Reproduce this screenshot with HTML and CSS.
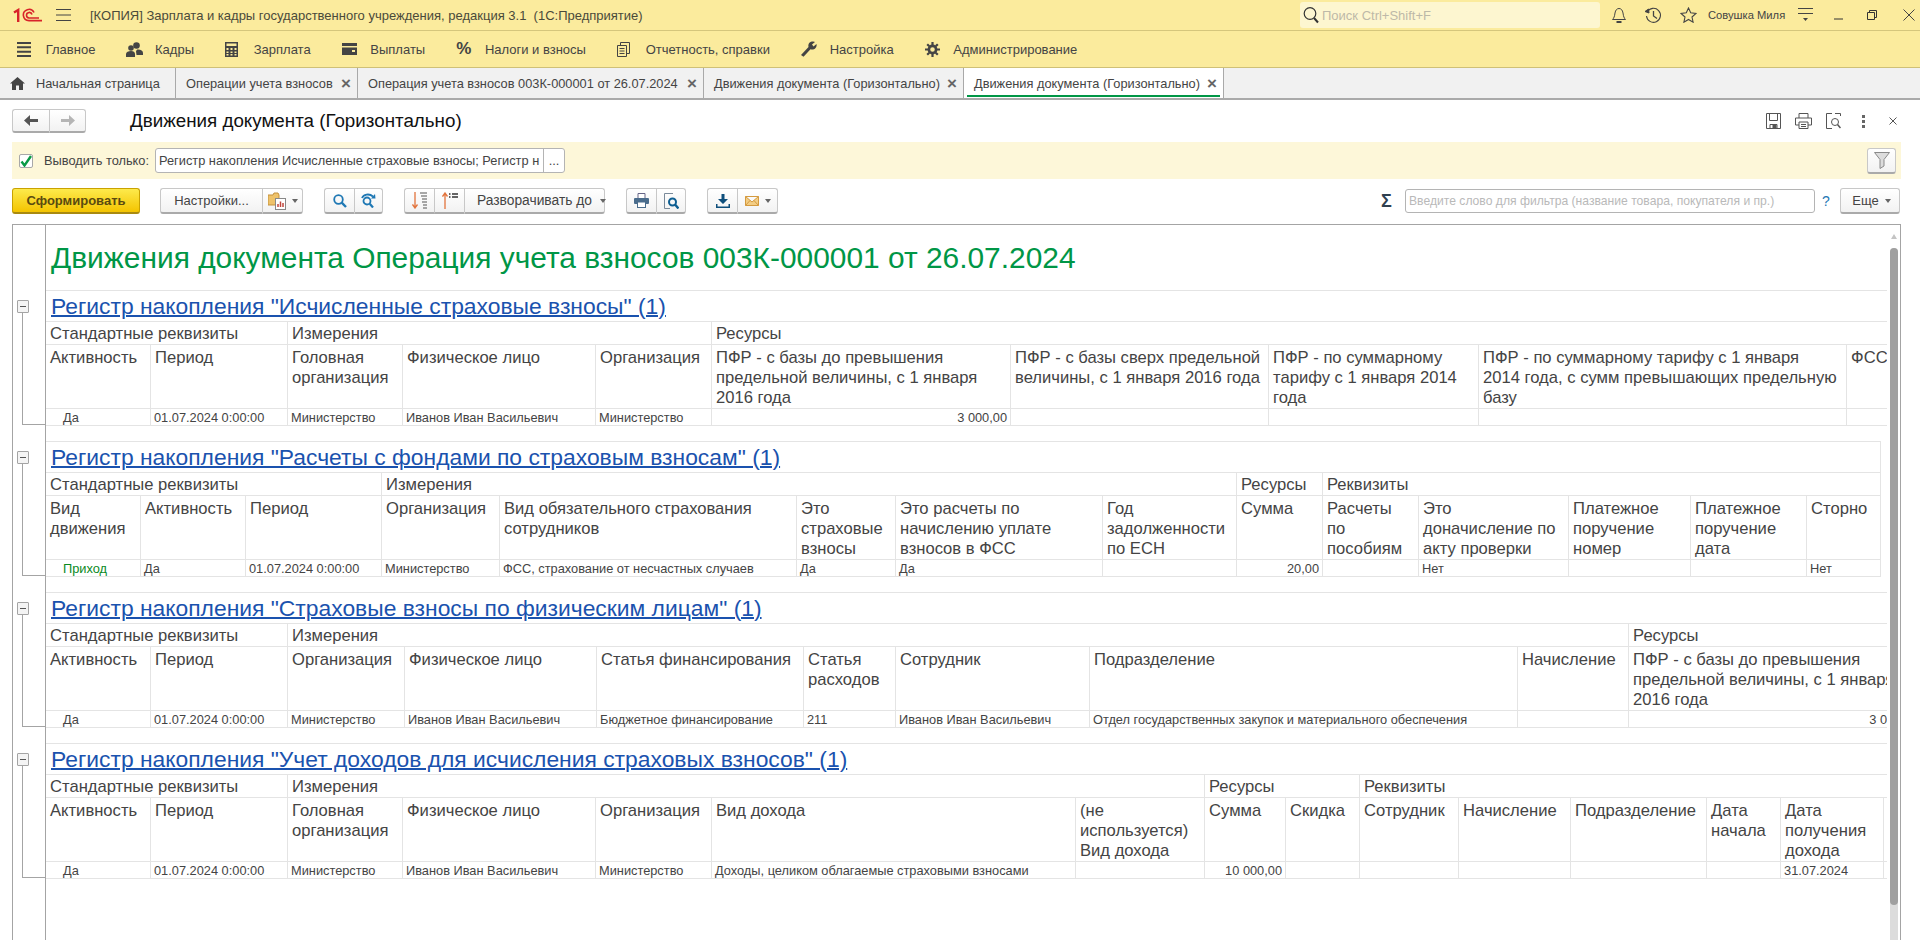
FILE: index.html
```html
<!DOCTYPE html>
<html lang="ru">
<head>
    <meta charset="UTF-8">
    <title>Движения документа (Горизонтально)</title>
    <link rel="stylesheet" href="styles.css">
</head>
<body>
    <!-- Window title -->
    <header class="titlebar">
        <svg class="logo" width="30" height="15" viewBox="0 0 30 15" fill="none" stroke="#d8232a">
            <path d="M1 4.5 5.2 2V14" stroke-width="2.4"/>
            <path d="M21 4.5A5.6 5.6 0 1 0 16 12.6H29" stroke-width="1.6"/>
            <path d="M19 6.5A2.8 2.8 0 1 0 16 10H26" stroke-width="1.6"/>
        </svg>
        <svg class="burger" width="15" height="12" viewBox="0 0 15 12" stroke="#444"><path d="M0 .5H15M0 6H15M0 11.5H15"/></svg>
        <span class="app-name">[КОПИЯ] Зарплата и кадры государственного учреждения, редакция 3.1&nbsp; (1С:Предприятие)</span>
        <div class="global-search">
            <svg width="16" height="18" viewBox="0 0 16 18" fill="none" stroke="#333"><circle cx="7" cy="7.5" r="5.8" stroke-width="1.2"/><path d="M11 12 15 16.5" stroke-width="2"/></svg>
            <span>Поиск Ctrl+Shift+F</span>
        </div>
        <div class="sys-icons">
            <svg width="16" height="17" viewBox="0 0 16 17" fill="none" stroke="#444"><path d="M1.5 12.5H14.5C13 11 12.5 9.5 12 6 11.5 3 10 1.5 8 1.5S4.5 3 4 6C3.5 9.5 3 11 1.5 12.5Z"/><path d="M5.5 15H10.5" stroke-width="2"/></svg>
            <svg width="17" height="17" viewBox="0 0 17 17" fill="none" stroke="#444"><path d="M2.3 5A7 7 0 1 1 1.5 9" stroke-width="1.1"/><path d="M0 4.5 3.5 2 4 6Z" fill="#444"/><path d="M8.5 4V9L12 11.5" stroke-width="1.3"/></svg>
            <svg width="17" height="16" viewBox="0 0 17 16" fill="none" stroke="#444" stroke-width="1.1"><path d="M8.5 1 10.7 5.8 16 6.4 12 10 13.1 15.2 8.5 12.5 3.9 15.2 5 10 1 6.4 6.3 5.8Z"/></svg>
        </div>
        <span class="user-name">Совушка Миля</span>
        <svg class="user-menu" width="15" height="14" viewBox="0 0 15 14" stroke="#444"><path d="M0 .5H15M0 5.5H15"/><path d="M5 10H10L7.5 13Z" fill="#444" stroke="none"/></svg>
        <svg class="win-min" width="9" height="2" viewBox="0 0 9 2"><path d="M0 1H9" stroke="#333"/></svg>
        <svg class="win-max" width="10" height="10" viewBox="0 0 10 10" fill="none" stroke="#333"><path d="M.5 2.5H7.5V9.5H.5Z"/><path d="M2.5 2.5V.5H9.5V7.5H7.5"/></svg>
        <svg class="win-close" width="12" height="12" viewBox="0 0 12 12" stroke="#444"><path d="M.5 .5 11.5 11.5M11.5 .5 .5 11.5"/></svg>
    </header>

    <!-- Sections -->
    <nav class="mainmenu">
        <a class="menu-item"><span class="menu-icon"><svg width="14" height="15" viewBox="0 0 14 15" stroke="#444" stroke-width="2"><path d="M0 1H14M0 5.3H14M0 9.7H14M0 14H14"/></svg></span>Главное</a>
        <a class="menu-item"><span class="menu-icon"><svg width="17" height="15" viewBox="0 0 17 15" fill="#444"><circle cx="10.5" cy="3.5" r="3.3"/><circle cx="5" cy="6" r="2.8"/><path d="M0 15V12C0 10 2.5 9 5 9S9 10 9 12V15ZM10 9.5C10.5 8 11 7.5 12 7.5 15 7.5 17 9 17 11V13H10.5Z"/></svg></span>Кадры</a>
        <a class="menu-item"><span class="menu-icon"><svg width="13" height="15" viewBox="0 0 13 15"><rect width="13" height="15" fill="#444"/><rect x="1.5" y="1.5" width="10" height="2.5" fill="#fbeb9d"/><path d="M1.5 6H3.5V8H1.5ZM5.5 6H7.5V8H5.5ZM9.5 6H11.5V8H9.5ZM1.5 9.5H3.5V11H1.5ZM5.5 9.5H7.5V11H5.5ZM9.5 9.5H11.5V11H9.5ZM1.5 12H3.5V13.5H1.5ZM5.5 12H7.5V13.5H5.5ZM9.5 12H11.5V13.5H9.5Z" fill="#fbeb9d"/></svg></span>Зарплата</a>
        <a class="menu-item"><span class="menu-icon"><svg width="15" height="12" viewBox="0 0 15 12" fill="#444"><path d="M0 0H15V3H0ZM0 4.5H15V12H0ZM10 7V9H13V7Z"/></svg></span>Выплаты</a>
        <a class="menu-item"><span class="menu-icon menu-percent">%</span>Налоги и взносы</a>
        <a class="menu-item"><span class="menu-icon"><svg width="13" height="15" viewBox="0 0 13 15" fill="none" stroke="#444"><path d="M.5 3.5H9.5V14.5H.5ZM3.5 3.5V.5H12.5V11.5H9.5M2.5 6.5H7.5M2.5 9H7.5M2.5 11.5H7.5"/></svg></span>Отчетность, справки</a>
        <a class="menu-item"><span class="menu-icon"><svg width="16" height="16" viewBox="0 0 16 16" fill="#444"><path d="M0 14 7.5 6C7 3.5 8 1 11 .5 12.5 .3 13.5 .5 14 1L11 3.5 12.5 5.5 15.5 3C16 5 15 8 12 8.5 11 8.7 10.3 8.5 9.5 8.2L2.5 15.8Z"/></svg></span>Настройка</a>
        <a class="menu-item"><span class="menu-icon"><svg width="15" height="15" viewBox="0 0 15 15" fill="none" stroke="#444"><circle cx="7.5" cy="7.5" r="3.6" stroke-width="2.6"/><path d="M7.5 0V3M7.5 12V15M0 7.5H3M12 7.5H15M2.2 2.2 4.3 4.3M10.7 10.7 12.8 12.8M12.8 2.2 10.7 4.3M4.3 10.7 2.2 12.8" stroke-width="2.2"/></svg></span>Администрирование</a>
    </nav>

    <!-- Open windows -->
    <div class="tabs">
        <div class="tab tab-home">
            <svg width="15" height="13" viewBox="0 0 15 13" fill="#444"><path d="M7.5 0 15 6.5H13V13H9V8.5H6V13H2V6.5H0Z"/></svg>
            Начальная страница
        </div>
        <div class="tab tab-ops">Операции учета взносов <span class="tab-close">×</span></div>
        <div class="tab tab-doc">Операция учета взносов 003К-000001 от 26.07.2024 <span class="tab-close">×</span></div>
        <div class="tab tab-move">Движения документа (Горизонтально) <span class="tab-close">×</span></div>
        <div class="tab tab-move tab-active">Движения документа (Горизонтально) <span class="tab-close">×</span></div>
    </div>

    <main class="form">
        <div class="form-head">
            <div class="btn-group nav-buttons">
                <button class="btn seg-nav"><svg width="14" height="11" viewBox="0 0 14 11" fill="#555"><path d="M6 0V4H14V7H6V11L0 5.5Z"/></svg></button>
                <button class="btn seg-nav"><svg width="14" height="11" viewBox="0 0 14 11" fill="#b5b5b5"><path d="M8 0V4H0V7H8V11L14 5.5Z"/></svg></button>
            </div>
            <h1 class="form-title">Движения документа (Горизонтально)</h1>
            <div class="form-icons">
                <svg width="15" height="16" viewBox="0 0 15 16" fill="none" stroke="#555"><path d="M.5 .5H14.5V15.5H.5ZM3.5 .5V7.5H11.5V.5M4 11.5H11V15.5H4Z"/><rect x="7" y="12.5" width="3" height="3" fill="#555"/></svg>
                <svg width="17" height="16" viewBox="0 0 17 16" fill="none" stroke="#555"><path d="M4 5V.5H13V5M4 12H.5V5H16.5V12H13M4 9H13V15.5H4ZM6 11.5H11M6 13.5H11"/></svg>
                <svg width="15" height="16" viewBox="0 0 15 16" fill="none" stroke="#555"><path d="M6 .5H.5V15.5H6M9 .5H14.5V3"/><circle cx="9" cy="9" r="3.5"/><path d="M11.5 11.5 14.5 15" stroke-width="1.5"/></svg>
                <svg width="3" height="13" viewBox="0 0 3 13" fill="#666"><rect width="3" height="3"/><rect y="5" width="3" height="3"/><rect y="10" width="3" height="3"/></svg>
                <svg width="8" height="8" viewBox="0 0 8 8" stroke="#555"><path d="M.5 .5 7.5 7.5M7.5 .5 .5 7.5"/></svg>
            </div>
        </div>

        <div class="filter-bar">
            <span class="checkbox"><svg width="12" height="12" viewBox="0 0 12 12" fill="none" stroke="#0a9a46" stroke-width="2.4"><path d="M1.5 6.5 4.5 10.5 11 1"/></svg></span>
            <label class="filter-label">Выводить только:</label>
            <div class="filter-field">
                <span class="filter-value">Регистр накопления Исчисленные страховые взносы; Регистр н</span>
                <span class="filter-more">...</span>
            </div>
            <button class="btn filter-btn"><svg width="16" height="17" viewBox="0 0 16 17" fill="#dcdcdc" stroke="#8a8a8a"><path d="M.5 .5H15.5L10 7.5V14L6 16.5V7.5Z"/></svg></button>
        </div>

        <div class="toolbar">
            <button class="btn btn-primary">Сформировать</button>
            <div class="btn-group">
                <button class="btn seg-settings">Настройки...</button>
                <button class="btn seg-variant">
                    <svg width="19" height="18" viewBox="0 0 19 18"><path d="M0 3H5L6 1H10L11 3V13H0Z" fill="#eec26a" stroke="#c4913c"/><rect x="7.5" y="6.5" width="10" height="11" fill="#fff" stroke="#888"/><path d="M10 15V12M12.5 15V9.5M15 15V11" stroke="#c0453c" stroke-width="1.5"/></svg>
                    <i class="caret"></i>
                </button>
            </div>
            <div class="btn-group">
                <button class="btn seg-icon"><svg width="14" height="14" viewBox="0 0 14 14" fill="none" stroke="#1f78b4" stroke-width="1.8"><circle cx="5.5" cy="5.5" r="4.3"/><path d="M8.7 8.7 13 13" stroke-width="2.4"/></svg></button>
                <button class="btn seg-icon seg-narrow"><svg width="15" height="15" viewBox="0 0 15 15" fill="none" stroke="#1f78b4" stroke-width="1.8"><circle cx="6" cy="8" r="3.5"/><path d="M8.7 10.7 12 14.5" stroke-width="2.2"/><path d="M1 5C2.5 1.5 8 0 12 3.5"/><path d="M10 5.5 14.5 5.5 14 1Z" fill="#1f78b4" stroke="none"/></svg></button>
            </div>
            <div class="btn-group">
                <button class="btn seg-icon"><svg width="16" height="17" viewBox="0 0 16 17" fill="none"><path d="M3 0V15M.5 12.5 3 16 5.5 12.5" stroke="#e2743d" stroke-width="1.3"/><path d="M8 1H15M9 4H15M10 7H15M10 10H15M11 13H15M11 16H15" stroke="#555"/></svg></button>
                <button class="btn seg-icon"><svg width="16" height="17" viewBox="0 0 16 17" fill="none"><path d="M3 2V17M.5 4.5 3 1 5.5 4.5" stroke="#e2743d" stroke-width="1.3"/><path d="M7 2H8.5M10 2H16M7 5H8.5M10 5H16" stroke="#333" stroke-width="1.5"/></svg></button>
                <button class="btn seg-expand">Разворачивать до <i class="caret"></i></button>
            </div>
            <div class="btn-group">
                <button class="btn seg-icon"><svg width="15" height="15" viewBox="0 0 15 15"><path d="M4 5V.5H11V5" fill="#fff" stroke="#668"/><rect y="5" width="15" height="6" rx="1" fill="#4a6c8c"/><rect x="3.5" y="9" width="8" height="5.5" fill="#fff" stroke="#4a6c8c"/></svg></button>
                <button class="btn seg-icon"><svg width="15" height="16" viewBox="0 0 15 16" fill="none"><path d="M9 .5H.5V15.5H6" stroke="#7a8a9a"/><circle cx="8.5" cy="9" r="3.5" stroke="#0f5f92" stroke-width="2"/><path d="M11 11.5 14.5 15.5" stroke="#0f5f92" stroke-width="2.4"/></svg></button>
            </div>
            <div class="btn-group">
                <button class="btn seg-icon"><svg width="14" height="14" viewBox="0 0 14 14" fill="#0f4f7c"><path d="M5.5 0H8.5V5H12L7 10 2 5H5.5Z"/><path d="M0 10H1.5V12.5H12.5V10H14V14H0Z"/></svg></button>
                <button class="btn seg-mail">
                    <svg width="14" height="10" viewBox="0 0 14 10" fill="#f3cd84" stroke="#d49a3f"><path d="M.5 .5H13.5V9.5H.5ZM.5 .5 7 6 13.5 .5M.5 9.5 5 4.5M13.5 9.5 9 4.5"/></svg>
                    <i class="caret"></i>
                </button>
            </div>
            <div class="toolbar-right">
                <span class="sigma">Σ</span>
                <div class="search-input">Введите слово для фильтра (название товара, покупателя и пр.)</div>
                <span class="help">?</span>
                <button class="btn btn-more">Еще <i class="caret"></i></button>
            </div>
        </div>

        <div class="report">
            <div class="report-body">
                <div class="report-head">
                    <div class="outline"></div>
                    <div class="report-title">Движения документа Операция учета взносов 003К-000001 от 26.07.2024</div>
                </div>

                <section class="reg">
                    <div class="outline"><span class="tree-box"></span><span class="tree-line"></span></div>
                    <div class="reg-main">
                        <div class="reg-title"><a>Регистр накопления "Исчисленные страховые взносы" (1)</a></div>
                        <table class="grid grid-1">
                            <colgroup><col><col><col><col><col><col><col><col><col><col></colgroup>
                            <tr class="row-group"><td colspan="2">Стандартные реквизиты</td><td colspan="3">Измерения</td><td colspan="5">Ресурсы</td></tr>
                            <tr class="row-head"><td>Активность</td><td>Период</td><td>Головная организация</td><td>Физическое лицо</td><td>Организация</td><td>ПФР - с базы до превышения предельной величины, с 1 января 2016 года</td><td>ПФР - с базы сверх предельной величины, с 1 января 2016 года</td><td>ПФР - по суммарному тарифу с 1 января 2014 года</td><td>ПФР - по суммарному тарифу с 1 января 2014 года, с сумм превышающих предельную базу</td><td>ФСС</td></tr>
                            <tr class="row-data"><td class="indent">Да</td><td>01.07.2024 0:00:00</td><td>Министерство</td><td>Иванов Иван Васильевич</td><td>Министерство</td><td class="num">3 000,00</td><td></td><td></td><td></td><td></td></tr>
                        </table>
                    </div>
                </section>

                <section class="reg">
                    <div class="outline"><span class="tree-box"></span><span class="tree-line"></span></div>
                    <div class="reg-main">
                        <div class="reg-title reg-title-boxed"><a>Регистр накопления "Расчеты с фондами по страховым взносам" (1)</a></div>
                        <table class="grid grid-2">
                            <colgroup><col><col><col><col><col><col><col><col><col><col><col><col><col><col></colgroup>
                            <tr class="row-group"><td colspan="3">Стандартные реквизиты</td><td colspan="5">Измерения</td><td>Ресурсы</td><td colspan="5">Реквизиты</td></tr>
                            <tr class="row-head"><td>Вид движения</td><td>Активность</td><td>Период</td><td>Организация</td><td>Вид обязательного страхования сотрудников</td><td>Это страховые взносы</td><td>Это расчеты по начислению уплате взносов в ФСС</td><td>Год задолженности по ЕСН</td><td>Сумма</td><td>Расчеты по пособиям</td><td>Это доначисление по акту проверки</td><td>Платежное поручение номер</td><td>Платежное поручение дата</td><td>Сторно</td></tr>
                            <tr class="row-data"><td class="indent move-in">Приход</td><td>Да</td><td>01.07.2024 0:00:00</td><td>Министерство</td><td>ФСС, страхование от несчастных случаев</td><td>Да</td><td>Да</td><td></td><td class="num">20,00</td><td></td><td>Нет</td><td></td><td></td><td>Нет</td></tr>
                        </table>
                    </div>
                </section>

                <section class="reg">
                    <div class="outline"><span class="tree-box"></span><span class="tree-line"></span></div>
                    <div class="reg-main">
                        <div class="reg-title"><a>Регистр накопления "Страховые взносы по физическим лицам" (1)</a></div>
                        <table class="grid grid-3">
                            <colgroup><col><col><col><col><col><col><col><col><col><col></colgroup>
                            <tr class="row-group"><td colspan="2">Стандартные реквизиты</td><td colspan="7">Измерения</td><td>Ресурсы</td></tr>
                            <tr class="row-head"><td>Активность</td><td>Период</td><td>Организация</td><td>Физическое лицо</td><td>Статья финансирования</td><td>Статья расходов</td><td>Сотрудник</td><td>Подразделение</td><td>Начисление</td><td>ПФР - с базы до превышения предельной величины, с 1 января 2016 года</td></tr>
                            <tr class="row-data"><td class="indent">Да</td><td>01.07.2024 0:00:00</td><td>Министерство</td><td>Иванов Иван Васильевич</td><td>Бюджетное финансирование</td><td>211</td><td>Иванов Иван Васильевич</td><td>Отдел государственных закупок и материального обеспечения</td><td></td><td class="num">3 000,00</td></tr>
                        </table>
                    </div>
                </section>

                <section class="reg">
                    <div class="outline"><span class="tree-box"></span><span class="tree-line"></span></div>
                    <div class="reg-main">
                        <div class="reg-title"><a>Регистр накопления "Учет доходов для исчисления страховых взносов" (1)</a></div>
                        <table class="grid grid-4">
                            <colgroup><col><col><col><col><col><col><col><col><col><col><col><col><col><col><col></colgroup>
                            <tr class="row-group"><td colspan="2">Стандартные реквизиты</td><td colspan="5">Измерения</td><td colspan="2">Ресурсы</td><td colspan="6">Реквизиты</td></tr>
                            <tr class="row-head"><td>Активность</td><td>Период</td><td>Головная организация</td><td>Физическое лицо</td><td>Организация</td><td>Вид дохода</td><td>(не используется) Вид дохода</td><td>Сумма</td><td>Скидка</td><td>Сотрудник</td><td>Начисление</td><td>Подразделение</td><td>Дата начала</td><td>Дата получения дохода</td><td></td></tr>
                            <tr class="row-data"><td class="indent">Да</td><td>01.07.2024 0:00:00</td><td>Министерство</td><td>Иванов Иван Васильевич</td><td>Министерство</td><td>Доходы, целиком облагаемые страховыми взносами</td><td></td><td class="num">10 000,00</td><td></td><td></td><td></td><td></td><td></td><td>31.07.2024</td><td></td></tr>
                        </table>
                    </div>
                </section>

                <div class="report-tail"><div class="outline"></div></div>
            </div>
            <div class="scrollbar">
                <span class="scroll-up"></span>
                <div class="scroll-track"><div class="scroll-thumb"></div></div>
            </div>
        </div>
    </main>
</body>
</html>
```

FILE: styles.css
```css
* {
    box-sizing: border-box;
}
html, body {
    margin: 0;
    height: 940px;
    overflow: hidden;
}
body {
    display: flex;
    flex-direction: column;
    background: #fff;
    color: #444;
    font-family: "Liberation Sans", Arial, sans-serif;
    font-size: 13px;
}

/* window title */
.titlebar {
    display: flex;
    align-items: center;
    height: 31px;
    flex: none;
    background: #fbeb9d;
    border-bottom: 1px solid #d5c67c;
    color: #4a4a3a;
}
.logo {
    margin: 0 0 0 13px;
}
.burger {
    margin-left: 13px;
}
.app-name {
    margin-left: 19px;
    width: 1210px;
    font-size: 13px;
    white-space: nowrap;
}
.global-search {
    display: flex;
    align-items: center;
    gap: 3px;
    width: 300px;
    height: 26px;
    padding-left: 3px;
    background: #fdf6d0;
    border-radius: 3px;
    color: #bdb9a8;
    font-size: 13px;
}
.sys-icons {
    display: flex;
    align-items: center;
    gap: 18px;
    margin-left: 11px;
}
.user-name {
    margin-left: 11px;
    font-size: 11.2px;
    color: #444;
    white-space: nowrap;
}
.user-menu {
    margin-left: 13px;
}
.win-min {
    margin: 7px 0 0 21px;
}
.win-max {
    margin-left: 24px;
}
.win-close {
    margin-left: 26px;
}

/* sections */
.mainmenu {
    display: flex;
    align-items: center;
    gap: 31px;
    height: 37px;
    flex: none;
    padding-left: 17px;
    background: #fbeb9d;
    border-bottom: 1px solid #cfc077;
    font-size: 13px;
}
.menu-item {
    display: flex;
    align-items: center;
    color: #444;
    white-space: nowrap;
}
.menu-icon {
    display: flex;
    align-items: center;
    width: 28.7px;
}
.menu-percent {
    font-size: 17px;
    font-weight: bold;
}

/* tabs */
.tabs {
    display: flex;
    height: 32px;
    flex: none;
    background: #f1f1f1;
    border-bottom: 2px solid #aaa;
    font-size: 12.8px;
}
.tab {
    display: flex;
    align-items: center;
    justify-content: space-between;
    padding: 0 6px 0 10px;
    border-right: 1px solid #a9a9a9;
    white-space: nowrap;
}
.tab-home {
    width: 176px;
    justify-content: flex-start;
    gap: 11px;
}
.tab-ops {
    width: 182px;
}
.tab-doc {
    width: 346px;
}
.tab-move {
    width: 260px;
}
.tab-active {
    position: relative;
    background: #fff;
}
.tab-active::after {
    content: "";
    position: absolute;
    left: 3px;
    right: 3px;
    bottom: 1px;
    height: 2px;
    background: #009646;
}
.tab-close {
    font-size: 17px;
    font-weight: bold;
    color: #666;
    line-height: 1;
}

/* form */
.form {
    display: flex;
    flex-direction: column;
    flex: 1;
    min-height: 0;
}
.form-head {
    display: flex;
    align-items: center;
    height: 42px;
    flex: none;
    padding: 0 23px 0 12px;
}
.form-title {
    margin: 0 0 0 44px;
    font-size: 18.8px;
    font-weight: normal;
    color: #111;
}
.form-icons {
    display: flex;
    align-items: center;
    gap: 14px;
    margin-left: auto;
}
.form-icons svg:nth-child(4) {
    margin: 0 10px 0 7px;
}
.btn {
    display: flex;
    align-items: center;
    justify-content: center;
    height: 26px;
    margin: 0;
    padding: 0;
    background: linear-gradient(#fff, #f2f2f2);
    border: 1px solid #c8c8c8;
    border-bottom: 2px solid #aaa;
    border-radius: 3px;
    color: #444;
    font-family: inherit;
    font-size: 13px;
    white-space: nowrap;
}
.btn-group {
    display: flex;
    flex: none;
}
.btn-group .btn {
    border-radius: 0;
    border-right: 0;
}
.btn-group .btn:first-child {
    border-radius: 3px 0 0 3px;
}
.btn-group .btn:last-child {
    border-right: 1px solid #c8c8c8;
    border-radius: 0 3px 3px 0;
}
.nav-buttons .btn {
    width: 37px;
    height: 24px;
}
.caret {
    display: inline-block;
    width: 0;
    height: 0;
    margin-left: 6px;
    border: 3px solid transparent;
    border-top: 4px solid #666;
    border-bottom: 0;
    vertical-align: middle;
}

/* filter */
.filter-bar {
    display: flex;
    align-items: center;
    height: 37px;
    flex: none;
    margin: 0 19px 0 12px;
    padding: 0 5px 0 7px;
    background: #fdf7d9;
}
.checkbox {
    display: flex;
    align-items: center;
    justify-content: center;
    width: 14px;
    height: 14px;
    background: #fff;
    border: 1px solid #a8a8a8;
    border-radius: 2px;
}
.filter-label {
    width: 111px;
    margin-left: 11px;
    font-size: 12.8px;
    white-space: nowrap;
}
.filter-field {
    display: flex;
    width: 410px;
    height: 25px;
    background: #fff;
    border: 1px solid #b4b4b4;
    border-radius: 3px;
    font-size: 12.8px;
    line-height: 23px;
}
.filter-value {
    flex: 1;
    padding-left: 3px;
    overflow: hidden;
    white-space: nowrap;
}
.filter-more {
    width: 21px;
    border-left: 1px solid #b4b4b4;
    text-align: center;
}
.filter-btn {
    width: 29px;
    margin-left: auto;
}

/* toolbar */
.toolbar {
    display: flex;
    align-items: flex-start;
    gap: 21px;
    height: 45px;
    flex: none;
    padding: 9px 20px 0 12px;
}
.btn-primary {
    width: 128px;
    margin-right: -1px;
    background: linear-gradient(#fdea4c, #f4c400);
    border: 1px solid #c9a200;
    border-bottom: 2px solid #a98a10;
    font-size: 13px;
    font-weight: bold;
    color: #5a4a10;
}
.seg-settings {
    width: 102px;
}
.seg-variant {
    width: 41px;
}
.seg-variant .caret {
    margin-left: 5px;
}
.seg-icon {
    width: 30px;
}
.seg-narrow {
    width: 29px;
}
.seg-expand {
    justify-content: flex-start;
    width: 141px;
    padding-left: 12px;
    font-size: 13.8px;
}
.seg-expand .caret {
    margin-left: 8px;
}
.seg-mail {
    width: 41px;
}
.toolbar-right {
    display: flex;
    align-items: flex-start;
    margin-left: auto;
}
.sigma {
    width: 28px;
    height: 26px;
    margin-right: 8px;
    padding-left: 12px;
    font-size: 18px;
    font-weight: bold;
    line-height: 26px;
    color: #2f4050;
}
.search-input {
    width: 410px;
    height: 24px;
    margin-top: 1px;
    padding-left: 3px;
    border: 1px solid #b4b4b4;
    border-radius: 3px;
    color: #b9b9b9;
    font-size: 12.15px;
    line-height: 22px;
    white-space: nowrap;
}
.help {
    width: 25px;
    padding-left: 7px;
    color: #1f78b4;
    font-size: 14px;
    line-height: 26px;
}
.btn-more {
    width: 60px;
    padding-left: 3px;
}

/* report */
.report {
    display: flex;
    flex: 1;
    min-height: 0;
    margin: 0 19px 0 12px;
    border: 1px solid #a4a4a4;
    border-bottom: 0;
}
.report-body {
    display: flex;
    flex-direction: column;
    flex: 1;
    min-width: 0;
    overflow: hidden;
}
.outline {
    display: flex;
    flex-direction: column;
    align-items: flex-start;
    width: 33px;
    flex: none;
    padding: 10px 0 16px 4px;
    border-right: 1px solid #a4a4a4;
}
.report-head {
    display: flex;
    height: 65px;
    flex: none;
}
.report-title {
    align-self: center;
    padding: 1px 0 0 5px;
    font-size: 29.9px;
    color: #009646;
    white-space: nowrap;
}
.report-tail {
    display: flex;
    flex: 1;
}
.reg {
    display: flex;
    flex: none;
    height: 151px;
}
.reg-main {
    flex: 1;
    min-width: 0;
    overflow: hidden;
}
.tree-box {
    position: relative;
    width: 12px;
    height: 13px;
    flex: none;
    background: #f4f4f4;
    border: 1px solid #a4a4a4;
    border-radius: 1px;
}
.tree-box::after {
    content: "";
    position: absolute;
    left: 2px;
    right: 2px;
    top: 5px;
    height: 1px;
    background: #555;
}
.tree-line {
    flex: 1;
    align-self: stretch;
    margin-left: 5px;
    margin-right: -1px;
    border-left: 1px solid #a4a4a4;
    border-bottom: 1px solid #a4a4a4;
}
.reg-title {
    height: 32px;
    padding-left: 5px;
    border-top: 1px solid #e4e4e4;
    border-bottom: 1px solid #e4e4e4;
    font-size: 22.85px;
    line-height: 31px;
    white-space: nowrap;
}
.reg-title a {
    color: #1a52ae;
    text-decoration: underline;
    text-decoration-thickness: 2px;
}
.reg-title-boxed {
    width: 1835px;
    border-right: 1px solid #e4e4e4;
}

/* register tables */
.grid {
    border-collapse: separate;
    border-spacing: 0;
    table-layout: fixed;
}
.grid td {
    padding: 0 6px 0 4px;
    border-right: 1px solid #e4e4e4;
    border-bottom: 1px solid #e4e4e4;
    overflow: hidden;
}
.row-group td {
    height: 23px;
    padding-top: 2px;
    font-size: 16.6px;
    line-height: 20px;
    white-space: nowrap;
}
.row-head td {
    height: 63px;
    padding-top: 3px;
    font-size: 16.6px;
    line-height: 20px;
    vertical-align: top;
}
.row-data td {
    height: 17px;
    padding-left: 3px;
    padding-right: 3px;
    font-size: 12.8px;
    line-height: 15px;
    white-space: nowrap;
}
.grid .indent {
    padding-left: 17px;
}
.grid .num {
    text-align: right;
}
.move-in {
    color: #0a8a1e;
}
.grid-1 {
    width: 1901px;
}
.grid-1 col:nth-child(1), .grid-3 col:nth-child(1), .grid-4 col:nth-child(1) {
    width: 105px;
}
.grid-1 col:nth-child(2), .grid-3 col:nth-child(2), .grid-4 col:nth-child(2) {
    width: 137px;
}
.grid-1 col:nth-child(3), .grid-4 col:nth-child(3) { width: 115px; }
.grid-1 col:nth-child(4), .grid-4 col:nth-child(4) { width: 193px; }
.grid-1 col:nth-child(5), .grid-4 col:nth-child(5) { width: 116px; }
.grid-1 col:nth-child(6) { width: 299px; }
.grid-1 col:nth-child(7) { width: 258px; }
.grid-1 col:nth-child(8) { width: 210px; }
.grid-1 col:nth-child(9) { width: 368px; }
.grid-1 col:nth-child(10) { width: 100px; }

.grid-2 {
    width: 1835px;
}
.grid-2 col:nth-child(1) { width: 95px; }
.grid-2 col:nth-child(2) { width: 105px; }
.grid-2 col:nth-child(3) { width: 136px; }
.grid-2 col:nth-child(4) { width: 118px; }
.grid-2 col:nth-child(5) { width: 297px; }
.grid-2 col:nth-child(6) { width: 99px; }
.grid-2 col:nth-child(7) { width: 207px; }
.grid-2 col:nth-child(8) { width: 134px; }
.grid-2 col:nth-child(9) { width: 86px; }
.grid-2 col:nth-child(10) { width: 96px; }
.grid-2 col:nth-child(11) { width: 150px; }
.grid-2 col:nth-child(12) { width: 122px; }
.grid-2 col:nth-child(13) { width: 116px; }
.grid-2 col:nth-child(14) { width: 74px; }

.grid-3 {
    width: 1877px;
}
.grid-3 col:nth-child(3) { width: 117px; }
.grid-3 col:nth-child(4) { width: 192px; }
.grid-3 col:nth-child(5) { width: 207px; }
.grid-3 col:nth-child(6) { width: 92px; }
.grid-3 col:nth-child(7) { width: 194px; }
.grid-3 col:nth-child(8) { width: 428px; }
.grid-3 col:nth-child(9) { width: 111px; }
.grid-3 col:nth-child(10) { width: 294px; }

.grid-4 {
    width: 1877px;
}
.grid-4 col:nth-child(6) { width: 364px; }
.grid-4 col:nth-child(7) { width: 129px; }
.grid-4 col:nth-child(8) { width: 81px; }
.grid-4 col:nth-child(9) { width: 74px; }
.grid-4 col:nth-child(10) { width: 99px; }
.grid-4 col:nth-child(11) { width: 112px; }
.grid-4 col:nth-child(12) { width: 136px; }
.grid-4 col:nth-child(13) { width: 74px; }
.grid-4 col:nth-child(14) { width: 103px; }
.grid-4 col:nth-child(15) { width: 40px; }

/* scrollbar */
.scrollbar {
    display: flex;
    flex-direction: column;
    align-items: center;
    width: 13px;
    flex: none;
}
.scroll-up {
    width: 0;
    height: 0;
    margin-top: 9px;
    border: 3px solid transparent;
    border-bottom: 5px solid #c4c4c4;
    border-top: 0;
}
.scroll-track {
    flex: 1;
    width: 8px;
    margin-top: 9px;
    background: #dcdcdc;
    border-radius: 4px 4px 0 0;
}
.scroll-thumb {
    height: 657px;
    background: #a0a0a0;
    border-radius: 4px;
}
```
